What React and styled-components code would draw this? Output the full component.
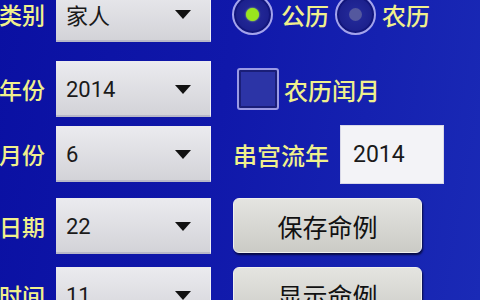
import styled, { createGlobalStyle } from "styled-components";

const GlobalStyle = createGlobalStyle`
  html, body {
    margin: 0;
    padding: 0;
    overflow: hidden;
  }
  body {
    width: 480px;
    height: 300px;
    background: linear-gradient(100deg, #0a10a2 0%, #1018aa 45%, #1a2ab6 100%);
    font-family: Roboto, "Noto Sans CJK SC", sans-serif;
  }
`;

const Screen = styled.div`
  width: 480px;
  height: 300px;
  overflow: hidden;
`;

const Table = styled.div`
  margin: -14px 0 0 -3px;
  display: grid;
  grid-template-columns: 48px 155px auto;
  grid-template-rows: 75px 65px 72px 69px 69px;
  column-gap: 11px;
`;

const Label = styled.div`
  height: ${(p) => p.h || 56}px;
  display: flex;
  align-items: center;
  justify-content: flex-end;
  color: #f0f08c;
  font-size: 23px;
  font-weight: 500;
  font-family: "Noto Sans CJK SC", sans-serif;
  white-space: nowrap;
`;

const Spinner = styled.div`
  height: 56px;
  box-sizing: border-box;
  display: flex;
  align-items: center;
  justify-content: space-between;
  padding: 2px 19px 0 10px;
  background: linear-gradient(#ebebef, #d3d3d8);
  border-right: 1px solid #f0f0f6;
  border-bottom: 2px solid #b8b8c8;
  color: #1a1a1a;
  font-size: 22px;
  font-family: Roboto, "Noto Sans CJK SC", sans-serif;
`;

const Arrow = styled.span`
  width: 0;
  height: 0;
  border-left: 8px solid transparent;
  border-right: 8px solid transparent;
  border-top: 9px solid #111;
`;

const Cell = styled.div`
  height: ${(p) => p.h || 56}px;
  margin-left: 11px;
  display: flex;
  align-items: center;
`;

const RadioCircle = styled.span`
  flex: none;
  width: 41px;
  height: 41px;
  box-sizing: border-box;
  border-radius: 50%;
  border: 2px solid #a4a4ec;
  background: radial-gradient(circle, #262c9c 0%, #1a1e8a 75%);
  box-shadow: inset 0 0 0 2px #12167a;
  display: flex;
  align-items: center;
  justify-content: center;
  margin-left: ${(p) => p.ml || 0}px;
  &::after {
    content: "";
    width: 13px;
    height: 13px;
    border-radius: 50%;
    background: ${(p) => (p.checked ? "#9ae61e" : "#54589e")};
    box-shadow: ${(p) => (p.checked ? "0 0 2px #c8ff60" : "none")};
  }
`;

const OptionText = styled.span`
  color: #f0f08c;
  font-size: 24px;
  font-weight: 500;
  font-family: "Noto Sans CJK SC", sans-serif;
  margin-left: ${(p) => p.ml || 8}px;
  white-space: nowrap;
`;

const CheckBox = styled.span`
  flex: none;
  width: 42px;
  height: 42px;
  box-sizing: border-box;
  margin-left: 4px;
  border: 2px solid #9a9ae4;
  border-radius: 3px;
  background: #2c34a6;
  box-shadow: inset 0 0 0 2px #1a1e78;
`;

const FieldLabel = styled.span`
  color: #f0f08c;
  font-size: 24px;
  font-weight: 500;
  font-family: "Noto Sans CJK SC", sans-serif;
  white-space: nowrap;
`;

const TextField = styled.div`
  width: 104px;
  height: 59px;
  box-sizing: border-box;
  margin-left: 11px;
  padding-left: 12px;
  display: flex;
  align-items: center;
  background: #f3f3f7;
  border: 1px solid #d8d8e8;
  color: #1a1a1a;
  font-size: 23px;
`;

const Button = styled.div`
  width: 189px;
  height: 55px;
  box-sizing: border-box;
  display: flex;
  align-items: center;
  justify-content: center;
  border-radius: 6px;
  background: linear-gradient(#e4e4e0, #cbcbc6);
  border: 1px solid #f0f0ee;
  box-shadow: 1px 2px 2px rgba(0, 0, 20, 0.7);
  color: #111;
  font-size: 25px;
  font-family: "Noto Sans CJK SC", sans-serif;
`;

const rows = [
  { label: "类别", value: "家人" },
  { label: "年份", value: "2014" },
  { label: "月份", value: "6" },
  { label: "日期", value: "22" },
  { label: "时间", value: "11" },
];

const App = () => {
  return (
    <>
      <GlobalStyle />
      <Screen>
        <Table>
          <Label>{rows[0].label}</Label>
          <Spinner>
            {rows[0].value}
            <Arrow />
          </Spinner>
          <Cell>
            <RadioCircle checked ml={-1} />
            <OptionText ml={8}>公历</OptionText>
            <RadioCircle ml={6} />
            <OptionText ml={6}>农历</OptionText>
          </Cell>

          <Label>{rows[1].label}</Label>
          <Spinner>
            {rows[1].value}
            <Arrow />
          </Spinner>
          <Cell>
            <CheckBox />
            <OptionText ml={5}>农历闰月</OptionText>
          </Cell>

          <Label>{rows[2].label}</Label>
          <Spinner>
            {rows[2].value}
            <Arrow />
          </Spinner>
          <Cell h={57}>
            <FieldLabel>串宫流年</FieldLabel>
            <TextField>2014</TextField>
          </Cell>

          <Label>{rows[3].label}</Label>
          <Spinner>
            {rows[3].value}
            <Arrow />
          </Spinner>
          <Cell h={55}>
            <Button>保存命例</Button>
          </Cell>

          <Label>{rows[4].label}</Label>
          <Spinner>
            {rows[4].value}
            <Arrow />
          </Spinner>
          <Cell h={55}>
            <Button>显示命例</Button>
          </Cell>
        </Table>
      </Screen>
    </>
  );
};

export default App;
